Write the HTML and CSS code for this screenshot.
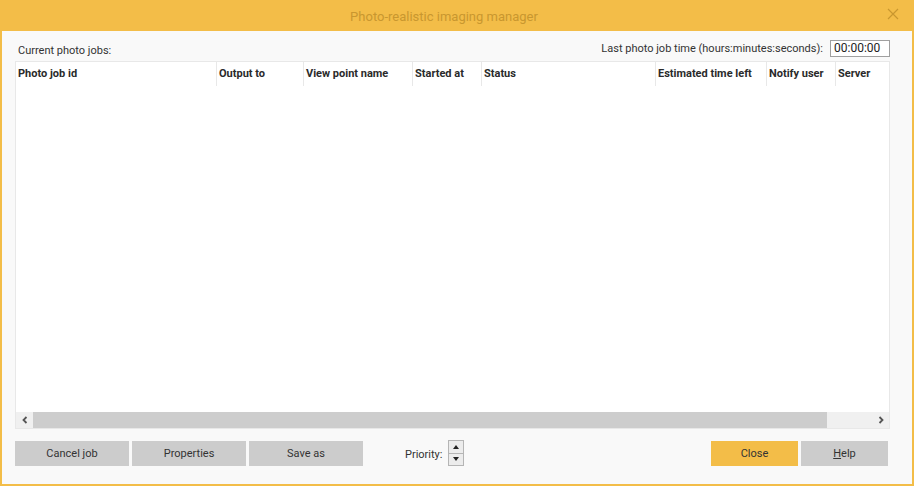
FILE: index.html
```html
<!DOCTYPE html>
<html>
<head>
<meta charset="utf-8">
<link rel="stylesheet" href="styles.css">
</head>
<body>
<div class="window">
  <div class="titlebar">
    <div class="title">Photo-realistic imaging manager</div>
    <svg class="close-x" width="12" height="12" viewBox="0 0 12 12"><path d="M1 1L11 11M11 1L1 11" stroke="#c9972f" stroke-width="1.2" fill="none"/></svg>
  </div>
  <div class="content">
    <div class="toprow">
      <span class="label">Current photo jobs:</span>
      <div class="lasttime">
        <span class="label">Last photo job time (hours:minutes:seconds):</span>
        <div class="timebox">00:00:00</div>
      </div>
    </div>
    <div class="table">
      <div class="thead">
        <div class="th c1">Photo job id</div>
        <div class="th c2">Output to</div>
        <div class="th c3">View point name</div>
        <div class="th c4">Started at</div>
        <div class="th c5">Status</div>
        <div class="th c6">Estimated time left</div>
        <div class="th c7">Notify user</div>
        <div class="th c8">Server</div>
      </div>
      <div class="tbody"></div>
      <div class="hscroll">
        <div class="sbtn"><svg width="8" height="8" viewBox="0 0 8 8"><path d="M5.5 1L2.5 4L5.5 7" stroke="#555" stroke-width="1.8" fill="none"/></svg></div>
        <div class="thumb"></div>
        <div class="track"></div>
        <div class="sbtn"><svg width="8" height="8" viewBox="0 0 8 8"><path d="M2.5 1L5.5 4L2.5 7" stroke="#555" stroke-width="1.8" fill="none"/></svg></div>
      </div>
    </div>
    <div class="buttons">
      <div class="leftbtns">
        <div class="btn">Cancel job</div>
        <div class="btn">Properties</div>
        <div class="btn">Save as</div>
        <div class="priority">
          <span class="label">Priority:</span>
          <div class="spinner">
            <div class="spin"><svg width="6" height="4" viewBox="0 0 6 4"><path d="M0 4L3 0L6 4Z" fill="#222"/></svg></div>
            <div class="spin"><svg width="6" height="4" viewBox="0 0 6 4"><path d="M0 0L3 4L6 0Z" fill="#222"/></svg></div>
          </div>
        </div>
      </div>
      <div class="rightbtns">
        <div class="btn btn-primary btn-small">Close</div>
        <div class="btn btn-small"><span class="ul">H</span>elp</div>
      </div>
    </div>
  </div>
</div>
</body>
</html>
```
FILE: styles.css
```css
html, body {
  margin: 0;
  padding: 0;
  background: #ffffff;
}
body {
  font-family: Roboto, "Liberation Sans", sans-serif;
  font-size: 11px;
  color: #333;
}
.window {
  width: 914px;
  height: 486px;
  box-sizing: border-box;
  border-left: 2px solid #f3bd48;
  border-right: 2px solid #f3bd48;
  border-bottom: 2px solid #f3bd48;
  background: #f9f9f9;
  display: flex;
  flex-direction: column;
}
.titlebar {
  height: 31px;
  flex: none;
  background: #f3bd48;
  display: flex;
  align-items: center;
  position: relative;
}
.title {
  flex: 1;
  text-align: center;
  color: #c9972f;
  font-size: 13px;
  padding-right: 26px;
  padding-top: 1px;
}
.close-x {
  position: absolute;
  right: 13px;
  top: 8px;
}
.content {
  flex: 1;
  display: flex;
  flex-direction: column;
  padding: 9px 22px 0 13px;
}
.toprow {
  display: flex;
  justify-content: space-between;
  align-items: center;
  height: 17px;
}
.toprow > .label {
  padding-left: 3px;
  padding-top: 3px;
}
.lasttime {
  display: flex;
  align-items: center;
  gap: 7px;
}
.label {
  color: #333;
  font-size: 11px;
}
.timebox {
  height: 15px;
  border: 1px solid #a0a0a0;
  background: #fff;
  font-size: 12px;
  line-height: 15px;
  padding-left: 3px;
  box-sizing: content-box;
  width: 55px;
  color: #222;
}
.table {
  margin-top: 4px;
  height: 368px;
  border: 1px solid #e8e8e8;
  box-sizing: border-box;
  background: #fff;
  display: flex;
  flex-direction: column;
}
.thead {
  display: flex;
  height: 24px;
  flex: none;
}
.th {
  box-sizing: border-box;
  border-left: 1px solid #e8e8e8;
  padding-left: 2px;
  padding-top: 1px;
  font-weight: bold;
  font-size: 11px;
  line-height: 22px;
  color: #2a2a2a;
  white-space: nowrap;
  overflow: hidden;
}
.th.c1 { width: 200px; border-left: none; }
.th.c2 { width: 87px; }
.th.c3 { width: 109px; }
.th.c4 { width: 69px; }
.th.c5 { width: 174px; }
.th.c6 { width: 111px; }
.th.c7 { width: 69px; }
.th.c8 { flex: 1; }
.tbody {
  flex: 1;
}
.hscroll {
  height: 16px;
  flex: none;
  display: flex;
  background: #f0f0f0;
}
.sbtn {
  width: 17px;
  display: flex;
  align-items: center;
  justify-content: center;
}
.thumb {
  width: 794px;
  background: #cdcdcd;
}
.track {
  flex: 1;
}
.buttons {
  margin-top: 12px;
  display: flex;
  justify-content: space-between;
  padding-right: 2px;
}
.leftbtns, .rightbtns {
  display: flex;
  gap: 3px;
  align-items: center;
}
.btn {
  width: 114px;
  height: 25px;
  background: #cccccc;
  color: #333;
  font-size: 11px;
  display: flex;
  align-items: center;
  justify-content: center;
}
.btn-small {
  width: 87px;
}
.btn-primary {
  background: #f3bd48;
}
.ul {
  text-decoration: underline;
}
.priority {
  display: flex;
  align-items: center;
  margin-left: 39px;
  gap: 5px;
}
.priority .label {
  padding-top: 1px;
}
.spinner {
  display: flex;
  flex-direction: column;
  width: 16px;
  height: 26px;
  box-sizing: border-box;
  border: 1px solid #b5b5b5;
  background: #b5b5b5;
  gap: 1px;
  margin-top: -1px;
}
.spin {
  flex: 1;
  background: #ececec;
  display: flex;
  align-items: center;
  justify-content: center;
}
```
